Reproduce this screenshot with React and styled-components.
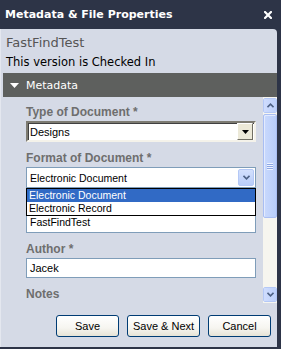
import React from 'react';
import styled, { createGlobalStyle } from 'styled-components';

const GlobalStyle = createGlobalStyle`
  html, body {
    margin: 0;
    padding: 0;
    background: #2d3447;
  }
  * {
    box-sizing: border-box;
  }
`;

const sans = `"Liberation Sans", Arial, sans-serif`;
const wide = `"DejaVu Sans", Verdana, sans-serif`;

const StyledWindow = styled.div`
  width: 281px;
  height: 349px;
  display: flex;
  flex-direction: column;
  padding-bottom: 2px;
  background: #2d3447;
  font-family: ${sans};
  overflow: hidden;
`;
const StyledTitleBar = styled.div`
  height: 29px;
  flex: none;
  display: flex;
  align-items: center;
  justify-content: space-between;
  padding: 0 9px 0 5px;
  color: #fff;
  font-family: ${wide};
  font-size: 11px;
  font-weight: bold;
`;
const StyledPanel = styled.div`
  flex: 1;
  min-height: 0;
  margin-right: 4px;
  display: flex;
  flex-direction: column;
  background: #d5dae6;
  border-left: 1px solid #e4e7ef;
  border-top-right-radius: 4px;
`;
const StyledHeader = styled.div`
  padding: 5px 6px 4px 5px;
`;
const StyledDocName = styled.div`
  font-family: ${wide};
  font-size: 13px;
  line-height: 17px;
  color: #555;
`;
const StyledStatus = styled.div`
  margin-top: 4px;
  font-family: ${wide};
  font-size: 11.5px;
  line-height: 14px;
  color: #000;
`;
const StyledSectionBar = styled.div`
  height: 24px;
  flex: none;
  margin-left: 2px;
  display: flex;
  align-items: center;
  gap: 7px;
  padding: 1px 0 0 7px;
  background: #5e605e;
  color: #fff;
  font-family: ${wide};
  font-size: 11px;
`;
const StyledScrollArea = styled.div`
  height: 206px;
  flex: none;
  display: flex;
`;
const StyledContent = styled.div`
  flex: 1;
  overflow: hidden;
  padding: 9px 7px 0 25px;
`;
const StyledField = styled.div`
  margin-bottom: 10px;
`;
const StyledLabel = styled.div`
  margin-bottom: 2px;
  font-size: 12px;
  line-height: 13px;
  font-weight: bold;
  color: #6e6e6e;
`;
const StyledClassicSelect = styled.div`
  height: 21px;
  display: flex;
  align-items: center;
  justify-content: space-between;
  padding: 0 1px 0 2px;
  background: #fff;
  border-style: solid;
  border-width: 2px;
  border-color: #7d7b72 #f4f2ea #f4f2ea #7d7b72;
  box-shadow: inset 1px 1px 0 #404040;
  font-size: 11px;
  color: #000;
`;
const StyledClassicButton = styled.div`
  width: 16px;
  height: 17px;
  display: flex;
  align-items: center;
  justify-content: center;
  background: #ece9d8;
  border-style: solid;
  border-width: 1px;
  border-color: #fff #716f64 #716f64 #fff;
`;
const StyledXpSelect = styled.div`
  height: 21px;
  display: flex;
  align-items: center;
  justify-content: space-between;
  padding: 0 1px 0 3px;
  background: #fff;
  border: 1px solid #7f9db9;
  font-size: 10.5px;
  color: #000;
`;
const StyledXpButton = styled.div`
  width: 16px;
  height: 17px;
  display: flex;
  align-items: center;
  justify-content: center;
  background: linear-gradient(#d3e0fd, #b9cdf9);
  border: 1px solid #b4c8f6;
  border-radius: 2px;
`;
const StyledList = styled.div`
  background: #fff;
  border: 1px solid #7f9db9;
  border-top: none;
`;
const StyledPopup = styled.div`
  margin: 0 -1px;
  border: 1px solid #000;
`;
const StyledOption = styled.div`
  height: ${p => (p.tall ? 16 : 13)}px;
  line-height: 13px;
  padding-left: ${p => (p.tall ? 3 : 2)}px;
  font-size: 10.5px;
  color: ${p => (p.active ? '#fff' : '#000')};
  background: ${p => (p.active ? '#316ac5' : '#fff')};
`;
const StyledInput = styled.div`
  height: 20px;
  display: flex;
  align-items: center;
  padding-left: 3px;
  background: #fff;
  border: 1px solid #7f9db9;
  font-size: 11px;
  color: #000;
`;
const StyledTextarea = styled.div`
  height: 40px;
  background: #fff;
  border: 1px solid #7f9db9;
`;
const StyledScrollbar = styled.div`
  width: 14px;
  flex: none;
  display: flex;
  flex-direction: column;
  padding: 1px 0 1px;
  background: #f6f5ef;
`;
const StyledScrollButton = styled.div`
  height: 15px;
  flex: none;
  display: flex;
  align-items: center;
  justify-content: center;
  background: linear-gradient(90deg, #cfdcfd, #bcd0fb);
  border: 1px solid #fff;
  outline: 1px solid #b4c8f6;
  outline-offset: -1px;
  border-radius: 2px;
`;
const StyledThumb = styled.div`
  height: 104px;
  flex: none;
  display: flex;
  align-items: center;
  justify-content: center;
  margin-top: 1px;
  background: linear-gradient(90deg, #c9d9fd, #b8cdfa);
  border: 1px solid #a9bef3;
  border-radius: 2px;
  box-shadow: inset 1px 1px 0 #e3ebfe;
`;
const StyledTrack = styled.div`
  flex: 1;
`;
const StyledGrip = styled.div`
  width: 6px;
  height: 7px;
  background: repeating-linear-gradient(#eef3fe 0 1px, #8ca6e4 1px 2px);
`;
const StyledFooter = styled.div`
  flex: 1;
  display: flex;
  justify-content: flex-end;
  align-items: flex-start;
  gap: 8px;
  padding: 12px 6px 0 0;
`;
const StyledButton = styled.button`
  width: ${p => p.w}px;
  height: 22px;
  padding: 0;
  border: 1px solid #003c74;
  border-radius: 3px;
  background: linear-gradient(#ffffff 0%, #f6f5f0 60%, #e6e3d6 100%);
  font-family: ${sans};
  font-size: 11px;
  color: #000;
`;

const CloseIcon = () => (
  <svg width="8" height="8" viewBox="0 0 8 8">
    <path d="M1 1L7 7M7 1L1 7" stroke="#fff" strokeWidth="2.2" strokeLinecap="square" />
  </svg>
);

const Triangle = () => (
  <svg width="9" height="5" viewBox="0 0 9 5">
    <path d="M0 0H9L4.5 5Z" fill="#fff" />
  </svg>
);

const BlackArrow = () => (
  <svg width="7" height="4" viewBox="0 0 7 4">
    <path d="M0 0H7L3.5 4Z" fill="#000" />
  </svg>
);

const Chevron = ({ up }) => (
  <svg width="7" height="5" viewBox="0 0 7 5" style={up ? { transform: 'rotate(180deg)' } : undefined}>
    <path d="M0.5 0.8L3.5 3.8L6.5 0.8" stroke="#4d6185" strokeWidth="1.6" fill="none" />
  </svg>
);

const formatOptions = ['Electronic Document', 'Electronic Record'];

const App = () => (
  <StyledWindow>
    <GlobalStyle />
    <StyledTitleBar>
      <span>Metadata &amp; File Properties</span>
      <CloseIcon />
    </StyledTitleBar>

    <StyledPanel>
      <StyledHeader>
        <StyledDocName>FastFindTest</StyledDocName>
        <StyledStatus>This version is Checked In</StyledStatus>
      </StyledHeader>

      <StyledSectionBar>
        <Triangle />
        Metadata
      </StyledSectionBar>

      <StyledScrollArea>
        <StyledContent>
          <StyledField>
            <StyledLabel>Type of Document *</StyledLabel>
            <StyledClassicSelect>
              Designs
              <StyledClassicButton>
                <BlackArrow />
              </StyledClassicButton>
            </StyledClassicSelect>
          </StyledField>

          <StyledField>
            <StyledLabel>Format of Document *</StyledLabel>
            <StyledXpSelect>
              Electronic Document
              <StyledXpButton>
                <Chevron />
              </StyledXpButton>
            </StyledXpSelect>
            <StyledList>
              <StyledPopup>
                {formatOptions.map((opt, i) => (
                  <StyledOption key={opt} active={i === 0}>
                    {opt}
                  </StyledOption>
                ))}
              </StyledPopup>
              <StyledOption tall>FastFindTest</StyledOption>
            </StyledList>
          </StyledField>

          <StyledField>
            <StyledLabel>Author *</StyledLabel>
            <StyledInput>Jacek</StyledInput>
          </StyledField>

          <StyledField>
            <StyledLabel>Notes</StyledLabel>
            <StyledTextarea />
          </StyledField>
        </StyledContent>

        <StyledScrollbar>
          <StyledScrollButton>
            <Chevron up />
          </StyledScrollButton>
          <StyledThumb>
            <StyledGrip />
          </StyledThumb>
          <StyledTrack />
          <StyledScrollButton>
            <Chevron />
          </StyledScrollButton>
        </StyledScrollbar>
      </StyledScrollArea>

      <StyledFooter>
        <StyledButton w={63}>Save</StyledButton>
        <StyledButton w={73}>Save &amp; Next</StyledButton>
        <StyledButton w={63}>Cancel</StyledButton>
      </StyledFooter>
    </StyledPanel>
  </StyledWindow>
);

export default App;
